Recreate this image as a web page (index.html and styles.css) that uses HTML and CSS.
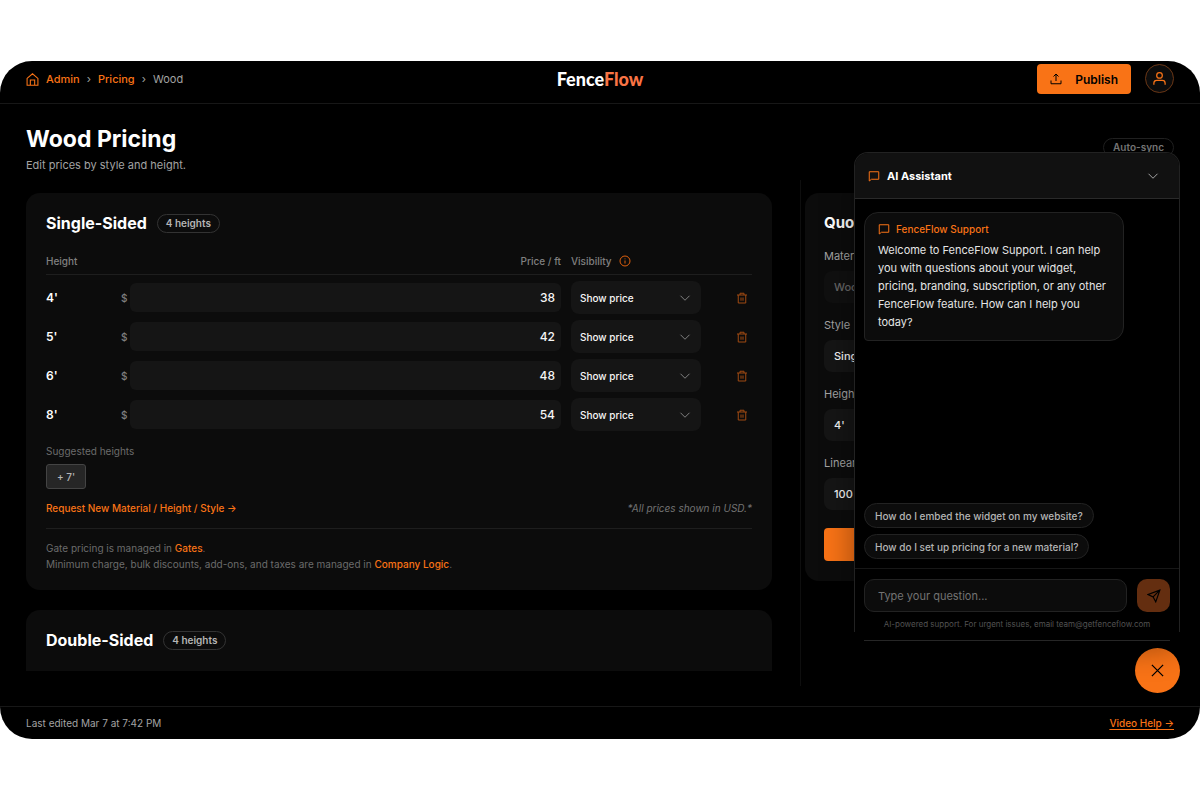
FILE: index.html
```html
<!DOCTYPE html>
<html lang="en">
<head>
    <meta charset="UTF-8">
    <meta name="viewport" content="width=device-width, initial-scale=1.0">
    <title>Wood Pricing - FenceFlow</title>
    <link rel="stylesheet" href="styles.css">
</head>
<body>

    <!-- Shared icons -->
    <svg class="sprite" aria-hidden="true">
        <symbol id="icon-chevron" viewBox="0 0 24 24"><path d="M3 7.500l9 9 9-9"/></symbol>
        <symbol id="icon-trash" viewBox="0 0 24 24"><path d="M2 6h20M8 6V2.500h8V6M4.500 6v16h15V6M10 11v6.500M14 11v6.500"/></symbol>
        <symbol id="icon-chat" viewBox="0 0 24 24"><path d="M2.500 3.500h19v15H7l-4.500 3.500z"/></symbol>
    </svg>

    <div class="app">
        <header class="topbar">
            <nav class="breadcrumb" aria-label="Breadcrumb">
                <svg class="icon homeIcon" viewBox="0 0 24 24"><path d="M2 10L12 1.500 22 10v12.500H2zM8 22v-9h8v9"/></svg>
                <a href="#admin">Admin</a>
                <span class="sep">›</span>
                <a href="#pricing">Pricing</a>
                <span class="sep">›</span>
                <span>Wood</span>
            </nav>
            <div class="logo">Fence<span>Flow</span></div>
            <div class="topActions">
                <button class="publish" type="button">
                    <svg class="icon" viewBox="0 0 24 24"><path d="M12 16V2.500M7 7l5-5 5 5M2 15v6.500h20V15"/></svg>
                    Publish
                </button>
                <button class="avatar" type="button" aria-label="Account">
                    <svg class="icon" viewBox="0 0 24 24"><circle cx="12" cy="7" r="4.500"/><path d="M3 22v-2.500a4.500 4.500 0 0 1 4.500-4.500h9a4.500 4.500 0 0 1 4.500 4.500V22"/></svg>
                </button>
            </div>
        </header>

        <main>
            <div class="pageHead">
                <div>
                    <h1>Wood Pricing</h1>
                    <p>Edit prices by style and height.</p>
                </div>
                <span class="badge syncBadge">Auto-sync</span>
            </div>

            <div class="columns">
                <div class="styleList">
                    <section class="card">
                        <div class="cardHead">
                            <h2>Single-Sided</h2>
                            <span class="badge">4 heights</span>
                        </div>

                        <table class="prices">
                            <thead>
                                <tr>
                                    <th class="colHeight">Height</th>
                                    <th class="colPrice">Price / ft</th>
                                    <th class="colShow">
                                        <span class="withInfo">Visibility
                                            <svg class="icon infoIcon" viewBox="0 0 24 24"><circle cx="12" cy="12" r="10"/><path d="M12 11v6M12 7v1.500"/></svg>
                                        </span>
                                    </th>
                                    <th class="colDelete"></th>
                                </tr>
                            </thead>
                            <tbody>
                                <tr>
                                    <td>4'</td>
                                    <td><label class="money">$<input type="text" value="38" aria-label="Price for 4 feet"></label></td>
                                    <td><div class="select"><select aria-label="Visibility for 4 feet"><option>Show price</option><option>Hide price</option></select><svg class="icon"><use href="#icon-chevron"/></svg></div></td>
                                    <td><button class="delete" type="button" aria-label="Delete 4 feet"><svg class="icon"><use href="#icon-trash"/></svg></button></td>
                                </tr>
                                <tr>
                                    <td>5'</td>
                                    <td><label class="money">$<input type="text" value="42" aria-label="Price for 5 feet"></label></td>
                                    <td><div class="select"><select aria-label="Visibility for 5 feet"><option>Show price</option><option>Hide price</option></select><svg class="icon"><use href="#icon-chevron"/></svg></div></td>
                                    <td><button class="delete" type="button" aria-label="Delete 5 feet"><svg class="icon"><use href="#icon-trash"/></svg></button></td>
                                </tr>
                                <tr>
                                    <td>6'</td>
                                    <td><label class="money">$<input type="text" value="48" aria-label="Price for 6 feet"></label></td>
                                    <td><div class="select"><select aria-label="Visibility for 6 feet"><option>Show price</option><option>Hide price</option></select><svg class="icon"><use href="#icon-chevron"/></svg></div></td>
                                    <td><button class="delete" type="button" aria-label="Delete 6 feet"><svg class="icon"><use href="#icon-trash"/></svg></button></td>
                                </tr>
                                <tr>
                                    <td>8'</td>
                                    <td><label class="money">$<input type="text" value="54" aria-label="Price for 8 feet"></label></td>
                                    <td><div class="select"><select aria-label="Visibility for 8 feet"><option>Show price</option><option>Hide price</option></select><svg class="icon"><use href="#icon-chevron"/></svg></div></td>
                                    <td><button class="delete" type="button" aria-label="Delete 8 feet"><svg class="icon"><use href="#icon-trash"/></svg></button></td>
                                </tr>
                            </tbody>
                        </table>

                        <p class="suggestLabel">Suggested heights</p>
                        <button class="addHeight" type="button">+ 7'</button>

                        <div class="requestRow">
                            <a href="#request">Request New Material / Height / Style →</a>
                            <em>*All prices shown in USD.*</em>
                        </div>

                        <div class="notes">
                            <p>Gate pricing is managed in <a href="#gates">Gates</a>.</p>
                            <p>Minimum charge, bulk discounts, add-ons, and taxes are managed in <a href="#logic">Company Logic</a>.</p>
                        </div>
                    </section>

                    <section class="card nextCard">
                        <div class="cardHead">
                            <h2>Double-Sided</h2>
                            <span class="badge">4 heights</span>
                        </div>
                    </section>
                </div>

                <aside>
                    <form class="card quote">
                        <h2>Quote Preview</h2>
                        <label for="qMaterial">Material</label>
                        <input id="qMaterial" type="text" value="Wood" disabled>
                        <label for="qStyle">Style</label>
                        <select id="qStyle"><option>Single-Sided</option><option>Double-Sided</option></select>
                        <label for="qHeight">Height</label>
                        <select id="qHeight"><option>4'</option><option>5'</option><option>6'</option><option>8'</option></select>
                        <label for="qFeet">Linear feet</label>
                        <input id="qFeet" type="text" value="100">
                        <button type="button" aria-label="Calculate"></button>
                    </form>
                </aside>
            </div>
        </main>

        <footer class="statusbar">
            <span>Last edited Mar 7 at 7:42 PM</span>
            <a href="#help">Video Help →</a>
        </footer>

        <button class="chatToggle" type="button" aria-label="Close chat">
            <svg class="icon" viewBox="0 0 24 24"><path d="M3 3l18 18M21 3L3 21"/></svg>
        </button>

        <!-- Support chat -->
        <div class="chat">
            <div class="chatPanel">
                <div class="chatHead">
                    <svg class="icon"><use href="#icon-chat"/></svg>
                    <h3>AI Assistant</h3>
                    <button type="button" aria-label="Minimize"><svg class="icon"><use href="#icon-chevron"/></svg></button>
                </div>
                <div class="messages">
                    <div class="bubble">
                        <div class="sender"><svg class="icon"><use href="#icon-chat"/></svg>FenceFlow Support</div>
                        <p>Welcome to FenceFlow Support. I can help you with questions about your widget, pricing, branding, subscription, or any other FenceFlow feature. How can I help you today?</p>
                    </div>
                </div>
                <div class="chips">
                    <button type="button">How do I embed the widget on my website?</button>
                    <button type="button">How do I set up pricing for a new material?</button>
                </div>
                <form class="ask">
                    <input type="text" placeholder="Type your question..." aria-label="Type your question">
                    <button type="button" aria-label="Send">
                        <svg class="icon" viewBox="0 0 24 24"><path d="M22 2L2 9.500l8.500 4L15 22zM22 2L10.500 13.500"/></svg>
                    </button>
                </form>
                <p class="chatNote">AI-powered support. For urgent issues, email team@getfenceflow.com</p>
            </div>
        </div>
    </div>

</body>
</html>
```

FILE: styles.css
```css
* {
    box-sizing: border-box;
}

body {
    margin: 0;
    padding: 61px 0;
    background-color: #fff;
    font-family: Inter, "Liberation Sans", sans-serif;
    font-size: 11px;
    line-height: 16px;
    color: #a3a3a3;
}

h1, h2, h3, p {
    margin: 0;
}

h2 {
    font-size: 16px;
    line-height: 20px;
    font-weight: 700;
    color: #fff;
}

a {
    color: #f97316;
    font-weight: 500;
    text-decoration: none;
}

button, input, select {
    margin: 0;
    padding: 0;
    border: none;
    font-family: inherit;
    font-size: 11px;
    color: #f5f5f5;
    appearance: none;
}

button, select {
    cursor: pointer;
}

.sprite {
    position: absolute;
    width: 0;
    height: 0;
}

.icon {
    width: 12px;
    height: 12px;
    flex-shrink: 0;
    fill: none;
    stroke: currentColor;
    stroke-width: 2;
}

.app {
    position: relative;
    display: flex;
    flex-direction: column;
    height: calc(100vh - 122px);
    background-color: #000;
    border-radius: 32px;
    overflow: hidden;
}

/* Top bar */
.topbar {
    display: grid;
    grid-template-columns: 1fr auto 1fr;
    align-items: center;
    padding: 3px 26px 9px;
    border-bottom: 1px solid #171717;
}

.breadcrumb {
    display: flex;
    align-items: center;
    gap: 7px;
    font-size: 11px;
}

.homeIcon {
    width: 13px;
    height: 13px;
    color: #f97316;
}

.logo {
    font-family: Lato, "Liberation Sans", sans-serif;
    font-size: 18px;
    line-height: 24px;
    font-weight: 900;
    color: #fff;
}

.logo span {
    color: #f97445;
}

.topActions {
    display: flex;
    justify-content: flex-end;
    gap: 14px;
}

.publish {
    display: flex;
    align-items: center;
    gap: 13px;
    height: 30px;
    padding: 0 13px;
    border-radius: 4px;
    background-color: #f97316;
    color: #000;
    font-size: 12px;
    font-weight: 600;
}

.avatar {
    display: flex;
    align-items: center;
    justify-content: center;
    width: 29px;
    height: 29px;
    border: 1px solid #6b3716;
    border-radius: 50%;
    background-color: #0c0c0c;
    color: #f97316;
}

.avatar .icon {
    width: 15px;
    height: 15px;
}

/* Page */
main {
    flex: 1;
    min-height: 0;
    display: flex;
    flex-direction: column;
    padding: 20px 26px;
}

.pageHead {
    display: flex;
    justify-content: space-between;
    padding-bottom: 6px;
}

h1 {
    font-size: 23px;
    line-height: 30px;
    font-weight: 700;
    color: #fff;
}

.pageHead p {
    margin-top: 2px;
    font-size: 11px;
    line-height: 18px;
}

.badge {
    height: 19px;
    padding: 0 8px;
    border: 1px solid #333;
    border-radius: 10px;
    font-size: 10px;
    line-height: 17px;
    font-weight: 600;
    color: #b5b5b5;
}

.syncBadge {
    margin-top: 14px;
    padding: 0 9px;
    border-color: #222;
    color: #808080;
}

.columns {
    flex: 1;
    min-height: 0;
    display: grid;
    grid-template-columns: minmax(0, 1fr) 374px;
    gap: 28px;
}

.styleList {
    display: flex;
    flex-direction: column;
    gap: 20px;
    margin: 13px 0 15px;
    overflow: hidden;
}

.card {
    flex-shrink: 0;
    padding: 20px 20px 18px;
    border-radius: 14px;
    background-color: #0c0c0c;
}

.nextCard {
    min-height: 120px;
}

.cardHead {
    display: flex;
    align-items: center;
    gap: 10px;
}

/* Price table */
.prices {
    width: 100%;
    margin-top: 20px;
    border-spacing: 0;
    table-layout: fixed;
}

.prices th {
    padding: 0 0 5px;
    border-bottom: 1px solid #1e1e1e;
    text-align: left;
    font-weight: 500;
    font-size: 10px;
    color: #808080;
}

.prices .colHeight {
    width: 75px;
}

.prices .colPrice {
    text-align: right;
}

.prices .colShow {
    width: 140px;
    padding-left: 10px;
}

.prices .colDelete {
    width: 51px;
}

.withInfo {
    display: flex;
    align-items: center;
    gap: 7px;
}

.infoIcon {
    color: #e0600c;
}

.prices td {
    padding: 3px 0;
    color: #fff;
    font-size: 12px;
    font-weight: 600;
}

.prices tr:first-child td {
    padding-top: 6px;
}

.prices td:nth-child(3) {
    padding-left: 10px;
}

.prices td:last-child {
    text-align: right;
}

.money {
    display: flex;
    align-items: center;
    gap: 3px;
    color: #808080;
    font-size: 10px;
    font-weight: 500;
}

.money input {
    flex: 1;
    min-width: 0;
    height: 29px;
    padding: 0 6px;
    border-radius: 6px;
    background-color: #151515;
    font-size: 12px;
    font-weight: 500;
    text-align: right;
}

.select {
    position: relative;
}

.select select {
    display: block;
    width: 100%;
    height: 33px;
    padding: 0 9px;
    border-radius: 8px;
    background-color: #151515;
    font-size: 10px;
    font-weight: 500;
}

.select .icon {
    position: absolute;
    top: 11px;
    right: 10px;
    color: #808080;
    pointer-events: none;
}

.delete {
    display: inline-flex;
    padding: 4px;
    background: none;
    color: #a04a12;
}

.suggestLabel {
    margin-top: 9px;
    font-size: 10px;
    color: #6b6b6b;
}

.addHeight {
    display: block;
    height: 25px;
    margin-top: 5px;
    padding: 0 10px;
    border: 1px solid #444;
    border-radius: 3px;
    background-color: #262626;
    color: #b5b5b5;
    font-size: 10px;
    font-weight: 500;
}

.requestRow {
    display: flex;
    justify-content: space-between;
    margin-top: 11px;
    padding-bottom: 12px;
    border-bottom: 1px solid #1e1e1e;
    font-size: 10px;
}

.requestRow em {
    color: #737373;
}

.notes {
    padding-top: 11px;
    font-size: 10px;
    color: #6b6b6b;
}

/* Quote preview */
aside {
    padding: 13px 0 0 4px;
    border-left: 1px solid #0e0e0e;
}

.quote {
    display: flex;
    flex-direction: column;
    padding: 20px 19px;
}

.quote h2 {
    font-size: 15px;
}

.quote label {
    margin: 14px 0 7px;
    font-size: 11px;
}

.quote h2 + label {
    margin-top: 15px;
}

.quote input,
.quote select {
    height: 32px;
    padding: 0 10px;
    border-radius: 8px;
    background-color: #151515;
    font-size: 11px;
    font-weight: 500;
}

.quote input:disabled {
    background-color: #101010;
    color: #666;
}

.quote button {
    height: 33px;
    margin-top: 18px;
    border-radius: 4px;
    background-color: #f97316;
    color: #000;
    font-weight: 600;
}

/* Bottom bar */
.statusbar {
    display: flex;
    justify-content: space-between;
    padding: 8px 26px;
    border-top: 1px solid #171717;
    font-size: 10px;
}

.statusbar a {
    text-decoration: underline;
    text-underline-offset: 2px;
}

/* Chat */
.chatToggle {
    position: absolute;
    right: 20px;
    bottom: 46px;
    display: flex;
    align-items: center;
    justify-content: center;
    width: 45px;
    height: 45px;
    border-radius: 50%;
    background-color: #f97316;
    color: #000;
}

.chatToggle .icon {
    width: 15px;
    height: 15px;
}

.chat {
    position: absolute;
    top: 91px;
    right: 20px;
    bottom: 98px;
    width: 326px;
    padding-bottom: 9px;
    border-radius: 14px;
    background-color: #000;
    box-shadow: 0 6px 32px rgba(0, 0, 0, 0.4);
}

.chat::after {
    content: "";
    position: absolute;
    left: 10px;
    right: 10px;
    bottom: 0;
    height: 1px;
    background-color: #262626;
}

.chatPanel {
    display: flex;
    flex-direction: column;
    height: 100%;
    border: 1px solid #222;
    border-bottom: none;
    border-radius: 14px 14px 0 0;
    overflow: hidden;
}

.chatHead {
    display: flex;
    align-items: center;
    gap: 7px;
    height: 46px;
    padding: 0 20px 0 13px;
    border-bottom: 1px solid #2a2a2a;
    background-color: #111;
    color: #f97316;
}

.chatHead h3 {
    flex: 1;
    font-size: 11px;
    font-weight: 700;
    color: #fff;
}

.chatHead button {
    display: flex;
    background: none;
    color: #a3a3a3;
}

.messages {
    flex: 1;
    min-height: 0;
    padding: 13px 9px;
}

.bubble {
    width: 260px;
    padding: 8px 13px 9px;
    border: 1px solid #222;
    border-radius: 14px 14px 14px 4px;
    background-color: #0c0c0c;
    color: #e5e5e5;
    font-size: 11px;
    line-height: 18px;
}

.sender {
    display: flex;
    align-items: center;
    gap: 6px;
    margin-bottom: 4px;
    color: #f97316;
    font-size: 10px;
    line-height: 16px;
    font-weight: 500;
}

.chips {
    display: flex;
    flex-direction: column;
    align-items: flex-start;
    gap: 6px;
    padding: 0 9px 9px;
    border-bottom: 1px solid #171717;
}

.chips button {
    height: 25px;
    padding: 0 10px;
    border: 1px solid #222;
    border-radius: 13px;
    background-color: #0c0c0c;
    color: #b5b5b5;
    font-size: 10px;
    font-weight: 500;
}

.ask {
    display: flex;
    gap: 10px;
    padding: 10px 9px 4px;
}

.ask input {
    flex: 1;
    min-width: 0;
    height: 33px;
    padding: 0 13px;
    border: 1px solid #222;
    border-radius: 10px;
    background-color: #0c0c0c;
    font-size: 11px;
}

.ask input::placeholder {
    color: #737373;
}

.ask button {
    display: flex;
    align-items: center;
    justify-content: center;
    width: 33px;
    height: 33px;
    border-radius: 10px;
    background-color: #642e10;
    color: #000;
}

.ask .icon {
    width: 14px;
    height: 14px;
}

.chatNote {
    text-align: center;
    font-size: 8px;
    color: #525252;
}
```
